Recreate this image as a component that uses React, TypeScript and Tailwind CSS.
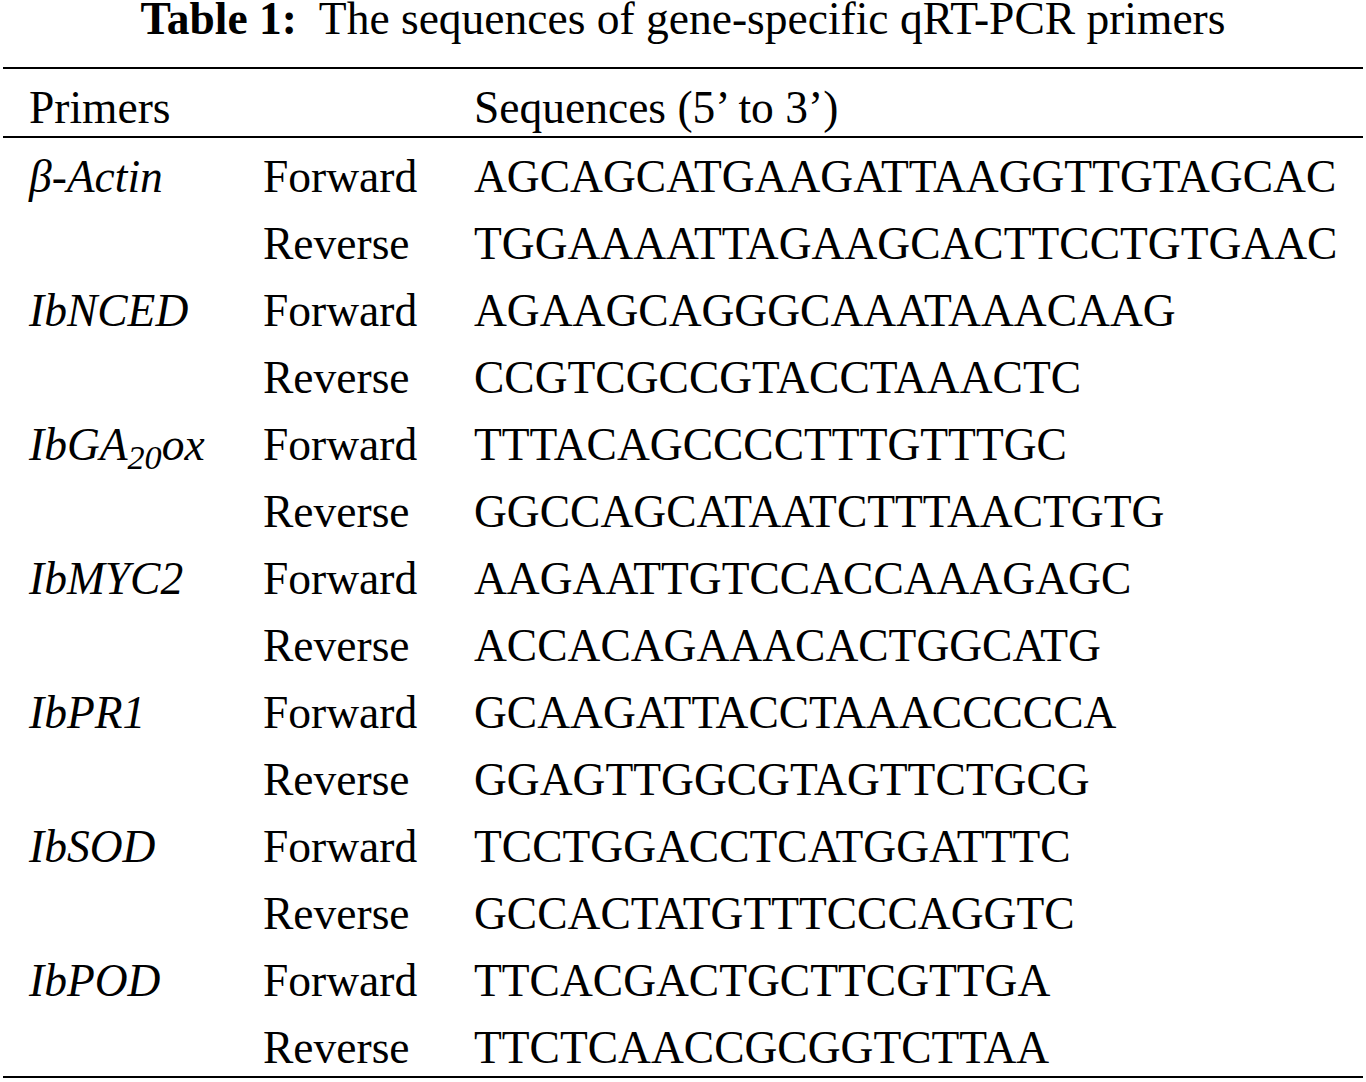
const rows: { gene: React.ReactNode; dir: string; seq: string }[] = [
  { gene: "β-Actin", dir: "Forward", seq: "AGCAGCATGAAGATTAAGGTTGTAGCAC" },
  { gene: "", dir: "Reverse", seq: "TGGAAAATTAGAAGCACTTCCTGTGAAC" },
  { gene: "IbNCED", dir: "Forward", seq: "AGAAGCAGGGCAAATAAACAAG" },
  { gene: "", dir: "Reverse", seq: "CCGTCGCCGTACCTAAACTC" },
  {
    gene: (
      <>
        IbGA<sub>20</sub>ox
      </>
    ),
    dir: "Forward",
    seq: "TTTACAGCCCCTTTGTTTGC",
  },
  { gene: "", dir: "Reverse", seq: "GGCCAGCATAATCTTTAACTGTG" },
  { gene: "IbMYC2", dir: "Forward", seq: "AAGAATTGTCCACCAAAGAGC" },
  { gene: "", dir: "Reverse", seq: "ACCACAGAAACACTGGCATG" },
  { gene: "IbPR1", dir: "Forward", seq: "GCAAGATTACCTAAACCCCCA" },
  { gene: "", dir: "Reverse", seq: "GGAGTTGGCGTAGTTCTGCG" },
  { gene: "IbSOD", dir: "Forward", seq: "TCCTGGACCTCATGGATTTC" },
  { gene: "", dir: "Reverse", seq: "GCCACTATGTTTCCCAGGTC" },
  { gene: "IbPOD", dir: "Forward", seq: "TTCACGACTGCTTCGTTGA" },
  { gene: "", dir: "Reverse", seq: "TTCTCAACCGCGGTCTTAA" },
]

export default function App() {
  return (
    <div className="w-[1366px] h-[1082px] overflow-hidden bg-white text-black font-['Liberation_Serif','Times_New_Roman',serif]">
      <h1 className="text-center text-[45.5px] leading-[38px] font-normal whitespace-nowrap">
        <span className="font-bold">Table 1:</span>&nbsp; The sequences of gene-specific qRT-PCR primers
      </h1>

      <div className="mx-[3px] mt-[29px] border-t-2 border-black" />
      <div className="grid grid-cols-[234px_211px_1fr] pl-[29px] mt-[11px] text-[45.5px] leading-[56px]">
        <div>Primers</div>
        <div />
        <div>Sequences (5’ to 3’)</div>
      </div>
      <div className="mx-[3px] border-t-2 border-black" />

      <div className="grid grid-cols-[234px_211px_1fr] gap-y-[11px] pl-[29px] mt-[11px] text-[45.5px] leading-[56px]">
        {rows.map((r, i) => (
          <div key={i} className="contents">
            <div className="italic">{r.gene}</div>
            <div>{r.dir}</div>
            <div className="whitespace-nowrap">{r.seq}</div>
          </div>
        ))}
      </div>
      <div className="mx-[3px] border-t-2 border-black" />
    </div>
  )
}
